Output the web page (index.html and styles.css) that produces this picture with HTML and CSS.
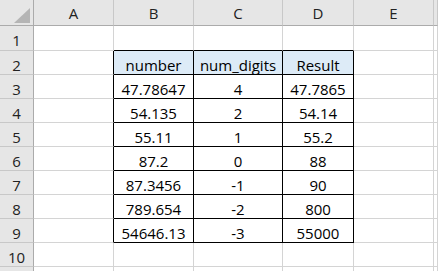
FILE: index.html
```html
<!DOCTYPE html>
<html lang="en">
<head>
    <meta charset="UTF-8">
    <title>ROUNDUP - num_digits</title>
    <link rel="stylesheet" href="styles.css">
</head>
<body>
    <div class="sheet">
        <!-- column headers -->
        <div class="hd corner">
            <svg width="34" height="25" viewBox="0 0 34 25"><polygon points="30,8 30,23 14,23" fill="#b5b5b5"/></svg>
        </div>
        <div class="hd col">A</div>
        <div class="hd col">B</div>
        <div class="hd col">C</div>
        <div class="hd col">D</div>
        <div class="hd col">E</div>
        <div class="hd col"></div>

        <!-- row 1 -->
        <div class="hd row">1</div>
        <div class="cell"></div>
        <div class="cell above"></div>
        <div class="cell above"></div>
        <div class="cell above"></div>
        <div class="cell"></div>
        <div class="cell"></div>

        <!-- row 2 -->
        <div class="hd row">2</div>
        <div class="cell left-of"></div>
        <div class="cell tbl head">number</div>
        <div class="cell tbl head">num_digits</div>
        <div class="cell tbl head">Result</div>
        <div class="cell"></div>
        <div class="cell"></div>

        <div class="hd row">3</div>
        <div class="cell left-of"></div>
        <div class="cell tbl">47.78647</div>
        <div class="cell tbl">4</div>
        <div class="cell tbl">47.7865</div>
        <div class="cell"></div>
        <div class="cell"></div>

        <div class="hd row">4</div>
        <div class="cell left-of"></div>
        <div class="cell tbl">54.135</div>
        <div class="cell tbl">2</div>
        <div class="cell tbl">54.14</div>
        <div class="cell"></div>
        <div class="cell"></div>

        <div class="hd row">5</div>
        <div class="cell left-of"></div>
        <div class="cell tbl">55.11</div>
        <div class="cell tbl">1</div>
        <div class="cell tbl">55.2</div>
        <div class="cell"></div>
        <div class="cell"></div>

        <div class="hd row">6</div>
        <div class="cell left-of"></div>
        <div class="cell tbl">87.2</div>
        <div class="cell tbl">0</div>
        <div class="cell tbl">88</div>
        <div class="cell"></div>
        <div class="cell"></div>

        <div class="hd row">7</div>
        <div class="cell left-of"></div>
        <div class="cell tbl">87.3456</div>
        <div class="cell tbl">-1</div>
        <div class="cell tbl">90</div>
        <div class="cell"></div>
        <div class="cell"></div>

        <div class="hd row">8</div>
        <div class="cell left-of"></div>
        <div class="cell tbl">789.654</div>
        <div class="cell tbl">-2</div>
        <div class="cell tbl">800</div>
        <div class="cell"></div>
        <div class="cell"></div>

        <div class="hd row">9</div>
        <div class="cell left-of"></div>
        <div class="cell tbl">54646.13</div>
        <div class="cell tbl">-3</div>
        <div class="cell tbl">55000</div>
        <div class="cell"></div>
        <div class="cell"></div>

        <div class="hd row">10</div>
        <div class="cell"></div>
        <div class="cell"></div>
        <div class="cell"></div>
        <div class="cell"></div>
        <div class="cell"></div>
        <div class="cell"></div>

        <div class="hd row"></div>
        <div class="cell"></div>
        <div class="cell"></div>
        <div class="cell"></div>
        <div class="cell"></div>
        <div class="cell"></div>
        <div class="cell"></div>
    </div>
</body>
</html>
```

FILE: styles.css
```css
* {
    margin: 0;
    padding: 0;
    box-sizing: border-box;
}

body {
    font-family: "Open Sans", "Liberation Sans", sans-serif;
    font-size: 15px;
    color: #000;
    background: #fff;
    overflow: hidden;
}

.sheet {
    display: grid;
    grid-template-columns: 34px 80px 80px 89px 71px 80px 1fr;
    grid-template-rows: 26px 25px repeat(9, 24px) 1fr;
    width: 438px;
    height: 271px;
    overflow: hidden;
}

.cell,
.hd {
    border-right: 1px solid #d4d4d4;
    border-bottom: 1px solid #d4d4d4;
    text-align: center;
    line-height: 20px;
    padding-top: 4px;
    white-space: nowrap;
    overflow: hidden;
}

.hd {
    background: #e6e6e6;
    color: #222;
}

.hd.col {
    padding-top: 3px;
    border-right-color: #c8c8c8;
    border-bottom-color: #ababab;
}

.hd.row {
    border-right-color: #ababab;
    border-bottom-color: #c8c8c8;
}

.hd.corner {
    padding: 0;
    border-right-color: #ababab;
    border-bottom-color: #ababab;
}

.hd.corner svg {
    display: block;
}

.cell.tbl {
    border-right-color: #000;
    border-bottom-color: #000;
}

.cell.head {
    background: #ddebf7;
}

.cell.above {
    border-bottom-color: #000;
}

.cell.left-of {
    border-right-color: #000;
}
```
